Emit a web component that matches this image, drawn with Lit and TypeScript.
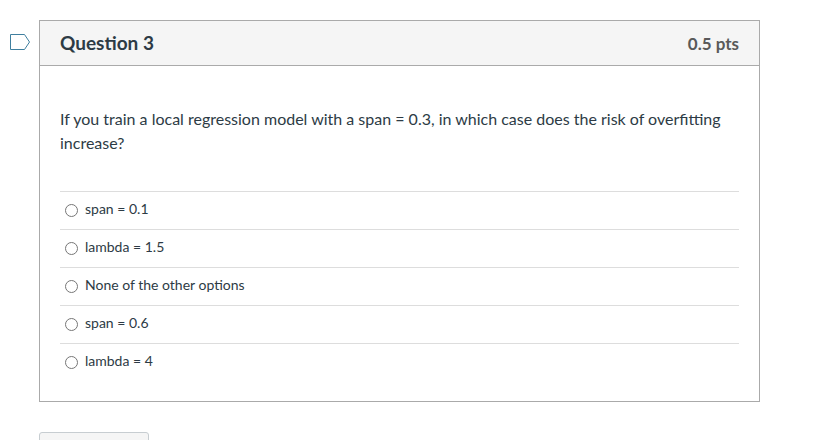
import { LitElement, html, css } from "lit";
import { customElement, property, state } from "lit/decorators.js";

@customElement("quiz-question")
class QuizQuestion extends LitElement {
  @property() heading = "";
  @property() points = "";
  @property() prompt = "";
  @property({ attribute: false }) options: string[] = [];
  @state() private selected = -1;
  @state() private flagged = false;

  static styles = css`
    :host {
      display: flex;
      align-items: flex-start;
    }
    .flag {
      flex: none;
      width: 39px;
      margin: 0;
      padding: 14px 8px 0 10px;
      border: 0;
      background: none;
      cursor: pointer;
      text-align: left;
    }
    .flag svg {
      display: block;
    }
    .shape {
      fill: none;
      stroke: #3f7f9f;
    }
    .flag[aria-pressed="true"] .shape {
      fill: #fc5e13;
    }
    .card {
      flex: 1;
      min-width: 0;
      border: 1px solid #aaa;
      background: #fff;
    }
    .header {
      display: flex;
      align-items: baseline;
      justify-content: space-between;
      padding: 10px 20px 9px;
      border-bottom: 1px solid #aaa;
      background: #f5f5f5;
      line-height: 24px;
    }
    .title {
      margin: 0;
      font-size: 19px;
      font-weight: 700;
    }
    .points {
      color: #595959;
      font-size: 17px;
      font-weight: 700;
    }
    .body {
      padding: 41px 20px 20px;
    }
    .prompt {
      margin: 0 0 36px;
      font-size: 16px;
      line-height: 24px;
    }
    .answers {
      margin: 0;
      padding: 0;
      border: 0;
      min-width: 0;
    }
    .answer {
      display: flex;
      align-items: center;
      gap: 7px;
      padding: 7px 5px 10px;
      border-top: 1px solid #ddd;
      font-size: 14px;
      line-height: 20px;
      cursor: pointer;
    }
    .radio {
      flex: none;
      width: 13px;
      height: 13px;
      margin: 3px 0 0;
    }
  `;

  render() {
    return html`
      <button
        class="flag"
        aria-label="Flag question"
        aria-pressed=${this.flagged ? "true" : "false"}
        @click=${() => (this.flagged = !this.flagged)}
      >
        <svg width="21" height="16" viewBox="0 0 21 16" aria-hidden="true">
          <path class="shape" d="M0.5 0.5H14.5L19.5 8L14.5 15.5H0.5Z" />
        </svg>
      </button>
      <section class="card" aria-labelledby="title">
        <header class="header">
          <h2 class="title" id="title">${this.heading}</h2>
          <span class="points">${this.points}</span>
        </header>
        <div class="body">
          <p class="prompt" id="prompt">${this.prompt}</p>
          <fieldset class="answers" aria-labelledby="prompt">
            ${this.options.map(
              (text, i) => html`
                <label class="answer">
                  <input
                    class="radio"
                    type="radio"
                    name="answer"
                    .checked=${this.selected === i}
                    @change=${() => (this.selected = i)}
                  />
                  <span>${text}</span>
                </label>
              `
            )}
          </fieldset>
        </div>
      </section>
    `;
  }
}

@customElement("app-root")
class AppRoot extends LitElement {
  static styles = css`
    :host {
      display: block;
      box-sizing: border-box;
      height: 100vh;
      overflow: hidden;
      padding: 20px 72px 0 0;
      background: #fff;
      color: #2d3b45;
      font-family: Lato, "Open Sans", sans-serif;
    }
    .pager {
      margin: 30px 0 0 39px;
    }
    .previous {
      width: 110px;
      height: 38px;
      border: 1px solid #c7cdd1;
      border-radius: 3px;
      background: #f5f5f5;
      color: inherit;
      cursor: pointer;
    }
  `;

  private options = [
    "span = 0.1",
    "lambda = 1.5",
    "None of the other options",
    "span = 0.6",
    "lambda = 4",
  ];

  render() {
    return html`
      <main>
        <quiz-question
          heading="Question 3"
          points="0.5 pts"
          prompt="If you train a local regression model with a span = 0.3, in which case does the risk of overfitting increase?"
          .options=${this.options}
        ></quiz-question>
        <nav class="pager">
          <button class="previous" aria-label="Previous"></button>
        </nav>
      </main>
    `;
  }
}
